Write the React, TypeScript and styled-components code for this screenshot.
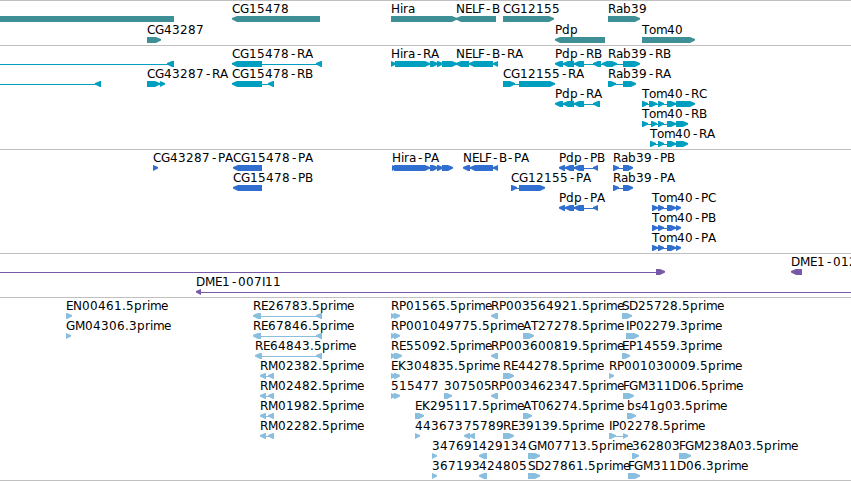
import React from "react";
import styled, { createGlobalStyle } from "styled-components";

const GlobalStyle = createGlobalStyle`
  body {
    margin: 0;
    background-color: white;
  }
`;

// Styled container for the whole browser view
const Browser = styled.main`
  display: flex;
  flex-direction: column;
  width: 851px;
  height: 481px;
  overflow: hidden;
  background-color: white;
`;

// Styled component for one tier of features
const Tier = styled.section<{ $height: number; $color: string }>`
  display: flex;
  flex-direction: column;
  box-sizing: border-box;
  height: ${(props) => props.$height}px;
  padding-top: 1px;
  border-top: 1px solid #c0c0c0;
  color: ${(props) => props.$color};
`;

// Styled component for the line that closes the last tier
const BottomRule = styled.div`
  height: 1px;
  background-color: #c0c0c0;
`;

// Styled component for one row of drawn features
const Lane = styled.svg<{ $height: number }>`
  display: block;
  flex: none;
  width: 851px;
  height: ${(props) => props.$height}px;
  overflow: visible;
`;

// Styled component for the feature name
const Label = styled.text`
  font-family: "DejaVu Sans", sans-serif;
  font-size: 12px;
  fill: black;
`;

type Block = [number, number];

type Feature = {
  name?: string;
  dir: "L" | "R";
  blocks: Block[];
  // the connector goes past the blocks when the feature leaves the view
  from?: number;
  to?: number;
  blunt?: boolean;
};

type TierData = {
  color: string;
  height: number;
  laneHeight: number;
  lanes: Feature[][];
};

const ADVANCE: Record<string, number> = {
  ".": 4, "-": 8, A: 8, B: 7, C: 8, D: 9, E: 7, F: 6, G: 9, H: 9, I: 3, K: 8,
  L: 6, M: 10, N: 9, P: 7, R: 8, S: 7, T: 7, a: 7, b: 8, d: 8, e: 7, g: 8,
  i: 3, m: 11, o: 7, p: 8, r: 5, s: 6,
};

// The hyphen is narrower than its cell, so it is centred in it
const glyphPositions = (name: string, start: number) => {
  let x = start;
  return name.split("").map((ch) => {
    const at = ch === "-" ? x + 2 : x;
    x += ADVANCE[ch] || 8;
    return at;
  });
};

const f = (name: string, dir: "L" | "R", ...blocks: Block[]): Feature => ({ name, dir, blocks });

const PDP_P: Block[] = [[559, 565], [565, 574], [574, 584], [593, 598]];
const TOM_P: Block[] = [[652, 658], [658, 664], [667, 676], [676, 681]];
const RM: Block[] = [[260, 266], [268, 274]];
const HEAD: Block[] = [[391, 396], [394, 400]];

const TIERS: TierData[] = [
  {
    color: "#3f8f96",
    height: 45,
    laneHeight: 21,
    lanes: [
      [
        { dir: "L", blocks: [[0, 174]], blunt: true },
        f("CG15478", "L", [232, 320]),
        f("Hira", "R", [391, 457]),
        f("NELF-B", "L", [456, 496]),
        f("CG12155", "R", [503, 554]),
        f("Rab39", "R", [608, 640]),
      ],
      [
        f("CG43287", "R", [147, 161]),
        f("Pdp", "L", [555, 605]),
        f("Tom40", "R", [642, 695]),
      ],
    ],
  },
  {
    color: "#009fc0",
    height: 104,
    laneHeight: 20,
    lanes: [
      [
        { dir: "L", blocks: [[167, 174]], from: 0 },
        f("CG15478-RA", "L", [232, 262], [316, 322]),
        f("Hira-RA", "R", [391, 396], [395, 430], [430, 438], [437, 443], [442, 457]),
        f("NELF-B-RA", "L", [456, 469], [469, 493], [493, 498]),
        f("Pdp-RB", "L", [555, 563], [563, 574], [574, 584], [593, 601], [602, 609]),
        f("Rab39-RB", "R", [608, 617], [623, 640]),
      ],
      [
        { dir: "L", blocks: [[95, 101]], from: 0 },
        f("CG43287-RA", "R", [147, 160], [160, 165]),
        f("CG15478-RB", "L", [232, 262], [268, 274]),
        f("CG12155-RA", "R", [503, 515], [519, 555]),
        f("Rab39-RA", "R", [608, 616], [623, 636]),
      ],
      [
        f("Pdp-RA", "L", [555, 563], [563, 574], [574, 584], [593, 600]),
        f("Tom40-RC", "R", [642, 648], [649, 657], [658, 664], [667, 676], [676, 695]),
      ],
      [f("Tom40-RB", "R", [642, 648], [651, 657], [658, 664], [667, 676], [676, 688])],
      [f("Tom40-RA", "R", [650, 656], [658, 664], [667, 676], [676, 688])],
    ],
  },
  {
    color: "#306fcf",
    height: 104,
    laneHeight: 20,
    lanes: [
      [
        f("CG43287-PA", "R", [153, 158]),
        f("CG15478-PA", "L", [233, 262]),
        f("Hira-PA", "R", [392, 396], [394, 430], [430, 438], [437, 443], [442, 453]),
        f("NELF-B-PA", "L", [463, 470], [470, 493], [493, 498]),
        f("Pdp-PB", "L", ...PDP_P),
        f("Rab39-PB", "R", [613, 619], [623, 633]),
      ],
      [
        f("CG15478-PB", "L", [233, 262]),
        f("CG12155-PA", "R", [511, 517], [519, 545]),
        f("Rab39-PA", "R", [613, 619], [623, 633]),
      ],
      [f("Pdp-PA", "L", ...PDP_P), f("Tom40-PC", "R", ...TOM_P)],
      [f("Tom40-PB", "R", ...TOM_P)],
      [f("Tom40-PA", "R", ...TOM_P)],
    ],
  },
  {
    color: "#7859a8",
    height: 44,
    laneHeight: 20,
    lanes: [
      [
        { dir: "R", blocks: [[656, 665]], from: 0 },
        f("DME1-012", "L", [791, 802]),
      ],
      [{ name: "DME1-007I11", dir: "L", blocks: [[196, 201]], to: 851 }],
    ],
  },
  {
    color: "#89bede",
    height: 183,
    laneHeight: 20,
    lanes: [
      [
        f("EN00461.5prime", "R", [66, 72]),
        f("RE26783.5prime", "L", [253, 261], [316, 322]),
        f("RP01565.5prime", "R", ...HEAD),
        f("RP003564921.5prime", "L", [491, 498]),
        f("SD25728.5prime", "R", [622, 632]),
      ],
      [
        f("GM04306.3prime", "R", [66, 71]),
        f("RE67846.5prime", "L", [253, 261], [316, 322]),
        f("RP001049775.5prime", "R", ...HEAD),
        f("AT27278.5prime", "R", [523, 534]),
        f("IP02279.3prime", "R", [626, 639]),
      ],
      [
        f("RE64843.5prime", "L", [255, 262], [316, 322]),
        f("RE55092.5prime", "R", [391, 396], [394, 402]),
        f("RP003600819.5prime", "L", [491, 498]),
        f("EP14559.3prime", "R", [622, 630]),
      ],
      [
        f("RM02382.5prime", "L", ...RM),
        f("EK304835.5prime", "R", ...HEAD),
        f("RE44278.5prime", "R", [503, 514]),
        f("RP001030009.5prime", "R", [609, 614]),
      ],
      [
        f("RM02482.5prime", "L", ...RM),
        f("515477", "R", ...HEAD),
        f("307505", "R", [444, 452]),
        f("RP003462347.5prime", "L", [491, 498]),
        f("FGM311D06.5prime", "R", [623, 634]),
      ],
      [
        f("RM01982.5prime", "L", ...RM),
        f("EK295117.5prime", "R", [415, 424]),
        f("AT06274.5prime", "R", [523, 532]),
        f("bs41g03.5prime", "R", [627, 636]),
      ],
      [
        f("RM02282.5prime", "L", ...RM),
        f("443673", "R", [415, 420]),
        f("75789", "L", [464, 470], [469, 475]),
        f("RE39139.5prime", "R", [503, 514]),
        f("IP02278.5prime", "R", [609, 616], [623, 628]),
      ],
      [
        f("347691", "R", [432, 437]),
        f("429134", "L", [479, 487]),
        f("GM07713.5prime", "R", [528, 540]),
        f("362803", "R", [632, 639]),
        f("FGM238A03.5prime", "R", [679, 691]),
      ],
      [
        f("367193", "R", [432, 437]),
        f("424805", "L", [479, 487]),
        f("SD27861.5prime", "R", [528, 540]),
        f("FGM311D06.3prime", "R", [628, 640]),
      ],
    ],
  },
];

// Outline of a block, pointed on the side it is read towards
const blockPoints = ([start, end]: Block, dir: "L" | "R", blunt?: boolean) => {
  const tip = blunt ? 0 : Math.min(5, end - start);
  if (dir === "R") {
    return `${start},14 ${end - tip},14 ${end},16 ${end},17.5 ${end - tip},20 ${start},20`;
  }
  return `${end},14 ${start + tip},14 ${start},16 ${start},17.5 ${start + tip},20 ${end},20`;
};

const FeatureGlyph: React.FC<{ feature: Feature }> = ({ feature }) => {
  const { name, dir, blocks, blunt } = feature;
  const from = feature.from ?? blocks[0][0] + 1;
  const to = feature.to ?? blocks[blocks.length - 1][1] - 1;
  return (
    <g fill="currentColor">
      {name && <Label x={glyphPositions(name, blocks[0][0]).join(" ")} y={11}>{name}</Label>}
      {!blunt && <rect x={from} y={17} width={to - from} height={1} />}
      {blocks.map((block) => (
        <polygon key={block[0]} points={blockPoints(block, dir, blunt)} />
      ))}
    </g>
  );
};

const App: React.FC = () => {
  return (
    <>
      <GlobalStyle />
      <Browser>
        {TIERS.map((tier) => (
          <Tier key={tier.color} $height={tier.height} $color={tier.color}>
            {tier.lanes.map((lane, index) => (
              <Lane key={index} $height={tier.laneHeight}>
                {lane.map((feature) => (
                  <FeatureGlyph key={feature.blocks[0][0]} feature={feature} />
                ))}
              </Lane>
            ))}
          </Tier>
        ))}
        <BottomRule />
      </Browser>
    </>
  );
};

export default App;
